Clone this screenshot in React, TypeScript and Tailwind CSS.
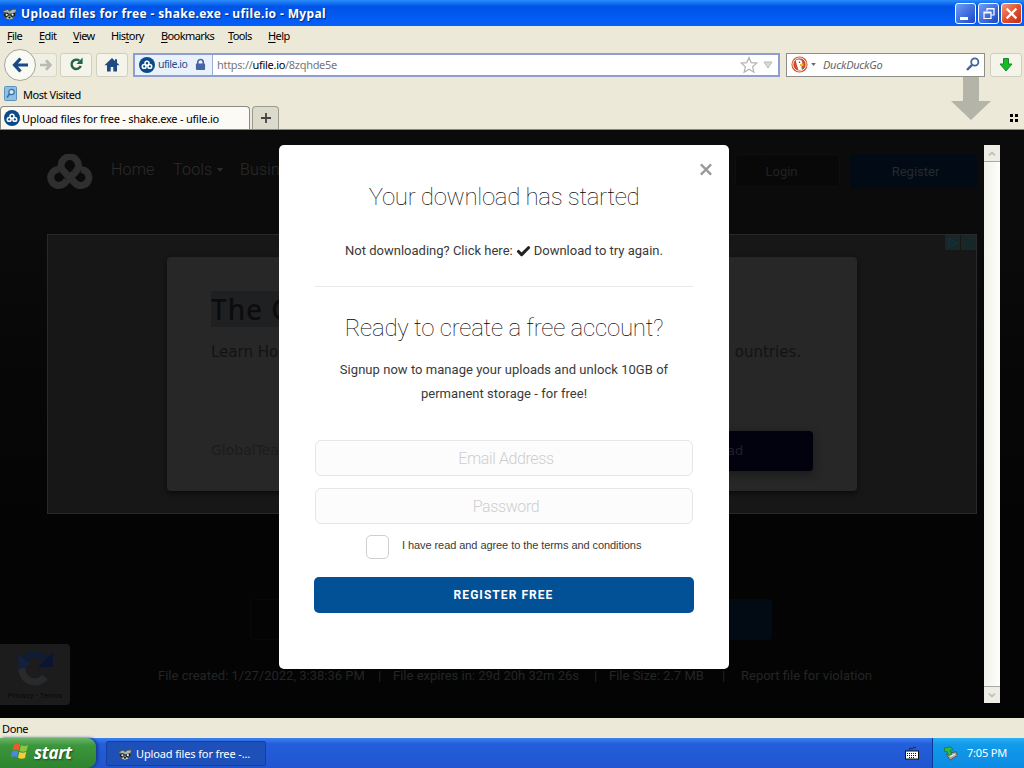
import React from "react";
import { Check } from "lucide-react";

const menuItems = [
  { label: "File", width: "w-8" },
  { label: "Edit", width: "w-[34px]" },
  { label: "View", width: "w-[38px]" },
  { label: "History", key: 3, width: "w-[50px]" },
  { label: "Bookmarks", width: "w-[67px]" },
  { label: "Tools", width: "w-10" },
  { label: "Help", width: "w-10" },
];

const fileInfo = [
  { text: "File created: 1/27/2022, 3:38:36 PM", width: "w-[208px]" },
  { text: "File expires in: 29d 20h 32m 26s", width: "w-[189px]" },
  { text: "File Size: 2.7 MB", width: "w-[101px]" },
  { text: "Report file for violation", width: "w-[130px]" },
];

function Knot({ className }: { className?: string }) {
  return (
    <svg viewBox="0 0 46 36" className={className} fill="none" stroke="currentColor" strokeWidth="7" strokeLinejoin="round">
      <path d="M19 28 L17 29.5 A8 8 0 1 1 12 15.5" />
      <path d="M28 18.5 L30 16 A8.6 8.6 0 1 0 15.5 16 L28 29 A8 8 0 1 0 34 15.5" />
      <path d="M29 17.5 L18 28.5" />
      <path d="M16 22.5 L19.5 26 M26 17.5 L22.5 14" stroke="#151515" strokeWidth="1" />
    </svg>
  );
}

function UfileIcon() {
  return (
    <div className="flex h-4 w-4 shrink-0 items-center justify-center rounded-full bg-[#0b4a86] text-white">
      <svg viewBox="0 0 16 16" className="h-4 w-4" fill="none" stroke="currentColor" strokeWidth="1.5">
        <circle cx="8" cy="6.2" r="2" />
        <circle cx="5.2" cy="9.4" r="1.9" />
        <circle cx="10.8" cy="9.4" r="1.9" />
      </svg>
    </div>
  );
}

function Raccoon({ className }: { className?: string }) {
  return (
    <svg viewBox="0 0 16 16" className={className}>
      <path d="M1 3 L5 4 L11 4 L15 1 L15 9 L11 14 L5 14 L1 11Z" fill="#4a5452" />
      <path d="M1 6 L6 4 L8 6 L11 4 L15 4 L14 7 L9 8 L5 7Z" fill="#a8b5b0" />
      <path d="M1.5 9 L6 7 L7 10 L4 12Z M9 9 L14 7 L14 10 L10 12Z" fill="#111a1a" />
      <circle cx="5" cy="9.4" r="1.2" fill="#e8f0ea" />
      <circle cx="11.3" cy="9.3" r="1.2" fill="#e8f0ea" />
      <path d="M4 13 L8 10.5 L12 13 L8 14.5Z" fill="#c5cdc8" />
      <circle cx="8" cy="12.3" r="1.2" fill="#101414" />
    </svg>
  );
}

function TitleBar() {
  const button = "flex h-[21px] w-[21px] items-center justify-center rounded-[3px] border border-white";
  return (
    <div className="flex h-[26px] items-center bg-linear-to-b from-[#2b8cfb] via-[#0054e6] via-25% to-[#0560fa] pl-0.5 pr-0.5">
      <Raccoon className="h-[15px] w-[15px]" />
      <h1 className="ml-1 grow whitespace-nowrap pt-px font-['Noto_Sans','Open_Sans',sans-serif] text-[12px] font-bold tracking-[0.36px] text-white [text-shadow:1px_1px_1px_#0a2a80]">
        Upload files for free - shake.exe - ufile.io - Mypal
      </h1>
      <div className="flex gap-0.5">
        <div className={`${button} bg-linear-to-br from-[#6f9cf5] to-[#1c44c8]`}>
          <span className="mt-2.5 mr-1 h-[3px] w-2 bg-white" />
        </div>
        <div className={`${button} bg-linear-to-br from-[#6f9cf5] to-[#1c44c8]`}>
          <svg viewBox="0 0 12 12" className="h-3 w-3" fill="none" stroke="white">
            <path d="M4 4V1.5H11V8H8.5M4 2H11M1 5H8V11.5H1ZM1 6H8" strokeWidth="1.2" />
          </svg>
        </div>
        <div className={`${button} bg-linear-to-br from-[#f0957a] via-[#df5030] to-[#c03010]`}>
          <svg viewBox="0 0 12 12" className="h-[13px] w-[13px]" stroke="white" strokeWidth="2">
            <path d="M1.5 1.5L10.5 10.5M10.5 1.5L1.5 10.5" />
          </svg>
        </div>
      </div>
    </div>
  );
}

function MenuBar() {
  return (
    <div className="flex h-[21px] items-center pl-[7px] text-[11px] tracking-[-0.6px]">
      {menuItems.map(({ label, key = 0, width }) => (
        <span key={label} className={`${width} whitespace-nowrap`}>
          {label.slice(0, key)}
          <span className="underline underline-offset-2">{label[key]}</span>
          {label.slice(key + 1)}
        </span>
      ))}
    </div>
  );
}

function NavBar() {
  const button = "flex h-6 w-8 items-center justify-center rounded-[3px] border border-[#d0cebf] bg-[#f5f4ea]";
  return (
    <div className="flex h-[35px] items-center pl-1 pr-0.5">
      <div className="z-10 flex h-8 w-8 shrink-0 items-center justify-center rounded-full border border-[#a5a498] bg-[#fafaf5]">
        <svg viewBox="0 0 16 16" className="h-4 w-4" fill="none" stroke="#184a86" strokeWidth="3.2">
          <path d="M8.5 1.5L2.5 8L8.5 14.5M2.5 8H16" />
        </svg>
      </div>
      <div className="-ml-1.5 flex h-6 w-[27px] items-center justify-center rounded-r-[3px] border border-[#d8d6c8] bg-[#f0efe4]">
        <svg viewBox="0 0 14 14" className="ml-1 h-3 w-3" fill="none" stroke="#b9bab5" strokeWidth="3.2">
          <path d="M7 1.5L12 7L7 12.5M12 7H0" />
        </svg>
      </div>
      <div className={`${button} ml-[3px]`}>
        <svg viewBox="0 0 16 16" className="h-[15px] w-[15px]" fill="none">
          <path d="M12.5 9.5A5 5 0 1 1 11 4" stroke="#266447" strokeWidth="2.6" />
          <path d="M14.5 0.5V7.5H8Z" fill="#266447" />
        </svg>
      </div>
      <div className={`${button} ml-1`}>
        <svg viewBox="0 0 16 16" className="h-4 w-4" fill="#204b80">
          <path d="M8 1L0.5 8.2H3V14.5H6.7V10H9.3V14.5H13V8.2H15.5L13 5.8V2.3H11V4Z" />
        </svg>
      </div>
      <div className="ml-[5px] flex h-6 w-[647px] items-center border-2 border-[#8f9ed2] bg-white">
        <div className="flex h-full w-[78px] shrink-0 items-center border-r border-[#9aaed5] bg-[#e9f1fb] pl-1 text-[#1d4f8c]">
          <UfileIcon />
          <span className="ml-[3px] w-[37px] whitespace-nowrap pt-px text-[10.5px] tracking-[-0.5px]">ufile.io</span>
          <svg viewBox="0 0 12 14" className="h-[13px] w-[11px]">
            <path d="M3 7V4.5A3 3 0 0 1 9 4.5V7" fill="none" stroke="#4a63a5" strokeWidth="1.8" />
            <rect x="1" y="6" width="10" height="7" rx="1" fill="#4a63a5" />
          </svg>
        </div>
        <span className="ml-1 grow pt-px text-[11px] tracking-[-0.3px] text-[#77777a]">
          https://<span className="text-black">ufile.io</span>/8zqhde5e
        </span>
        <svg viewBox="0 0 18 18" className="h-[18px] w-[18px]" fill="#fff" stroke="#b4b4b4" strokeWidth="1.2">
          <path d="M9 1.5L11.2 6.6L16.8 7.1L12.6 10.7L13.9 16.2L9 13.3L4.1 16.2L5.4 10.7L1.2 7.1L6.8 6.6Z" />
        </svg>
        <svg viewBox="0 0 10 8" className="mx-[5px] h-2 w-2.5" fill="#d8dcd8" stroke="#b4b9b4">
          <path d="M1 1H9L5 7Z" />
        </svg>
      </div>
      <div className="ml-1.5 flex h-6 w-[199px] items-center border border-[#8e8e88] bg-white pl-1">
        <svg viewBox="0 0 18 18" className="h-[17px] w-[17px]">
          <circle cx="9" cy="9" r="8.5" fill="#cf4a24" />
          <circle cx="9" cy="9" r="7" fill="none" stroke="#fff" strokeWidth="1" />
          <path d="M5 4.5C9 2.8 12 4 12 7.5L11 10L12 14.5L8 15L6 9Z" fill="#fff" />
          <path d="M9.5 8.5L13.5 8L13 10.5L9.5 10.5Z" fill="#f1b62c" />
          <path d="M10 12.5L13 12V14Z" fill="#3e9a3a" />
          <circle cx="9" cy="6.6" r="0.8" fill="#254a80" />
        </svg>
        <svg viewBox="0 0 6 4" className="ml-[3px] h-[3px] w-[5px]" fill="#666">
          <path d="M0 0H6L3 4Z" />
        </svg>
        <span className="ml-[7px] grow pt-px text-[11px] tracking-[-0.25px] italic text-[#666]">DuckDuckGo</span>
        <svg viewBox="0 0 14 14" className="mr-1 mb-0.5 h-3.5 w-3.5" fill="none" stroke="#40679b">
          <circle cx="8.8" cy="5" r="3.6" strokeWidth="1.8" />
          <path d="M6 7.8L1 13" strokeWidth="2.4" />
        </svg>
      </div>
      <div className={`${button} ml-[5px]`}>
        <svg viewBox="0 0 14 14" className="h-3.5 w-3.5" fill="#14bb25" stroke="#16872a">
          <path d="M4.5 0.5H9.5V6H13L7 13L1 6H4.5Z" />
        </svg>
      </div>
    </div>
  );
}

function TabStrip() {
  return (
    <div className="flex h-[25px] items-end border-b border-[#88877c]">
      <div className="flex h-[23px] w-[250px] items-center rounded-t-[4px] border border-b-0 border-[#8b8a80] bg-[#fbfaf4] pl-[3px]">
        <UfileIcon />
        <span className="ml-0.5 whitespace-nowrap pt-0.5 text-[11px] tracking-[-0.22px]">
          Upload files for free - shake.exe - ufile.io
        </span>
      </div>
      <div className="ml-0.5 flex h-[23px] w-[27px] items-center justify-center rounded-t-[4px] border border-b-0 border-[#9c9b90] bg-[#dcdacb]">
        <svg viewBox="0 0 10 10" className="h-2.5 w-2.5" stroke="#444" strokeWidth="1.8">
          <path d="M5 0V10M0 5H10" />
        </svg>
      </div>
      <div className="mr-1.5 mb-[7px] ml-auto grid grid-cols-2 gap-[2px]">
        <span className="h-[3px] w-[3px] bg-black" />
        <span className="h-[3px] w-[3px] bg-black" />
        <span className="h-[3px] w-[3px] bg-black" />
        <span className="h-[3px] w-[3px] bg-black" />
      </div>
    </div>
  );
}

function DimmedPage() {
  return (
    <div className="flex h-full flex-col bg-linear-to-b from-[#0b0b0b] from-15% to-[#040404] to-65% font-[Roboto,sans-serif] text-[#2b2b2b]">
      <div className="flex h-[104px] items-start pt-6 pl-[47px] pr-[47px]">
        <Knot className="h-9 w-[46px] text-[#2f2f2f]" />
        <div className="ml-[18px] flex w-[624px] pt-1 text-[16px] font-light tracking-[0.2px]">
          <span className="w-[62px]">Home</span>
          <span className="flex w-[67px] items-center">
            Tools
            <svg viewBox="0 0 8 5" className="ml-1 h-1 w-2" fill="currentColor">
              <path d="M0 0H8L4 5Z" />
            </svg>
          </span>
          <span>Business</span>
        </div>
        <div className="flex h-[33px] w-[105px] shrink-0 items-center justify-center rounded border border-[#0e0e0e] bg-[#080808] pt-0.5 pr-3 text-[13px] text-[#222]">
          Login
        </div>
        <div className="ml-2.5 flex h-[34px] w-[127px] shrink-0 items-center justify-center rounded bg-[#020b15] pt-0.5 pl-1 text-[13px] text-[#232a30]">
          Register
        </div>
      </div>

      <div className="relative mx-[47px] flex h-[280px] shrink-0 items-center justify-center border border-[#292929] bg-[#171717]">
        <div className="absolute top-0 right-0 flex gap-px">
          <div className="flex h-[15px] w-[15px] items-center justify-center bg-[#1b2627]">
            <svg viewBox="0 0 12 12" className="h-3 w-3" fill="none" stroke="#0a3640" strokeWidth="1.3">
              <path d="M2 1.5L10 6L2 10.5Z" />
            </svg>
          </div>
          <div className="flex h-[15px] w-[15px] items-center justify-center bg-[#1b2627]">
            <svg viewBox="0 0 12 12" className="h-3 w-3" stroke="#0d2b30" strokeWidth="1.6">
              <path d="M2 2L10 10M10 2L2 10" />
            </svg>
          </div>
        </div>
        <div className="flex h-[234px] w-[690px] flex-col rounded bg-[#272727] pt-[34px] pr-11 pl-11 shadow-[0_2px_5px_#0b0b0b]">
          <div className="flex">
            <span className="h-9 bg-[#1f2021] pr-2 font-['Noto_Sans',sans-serif] text-[28px] leading-9 font-medium tracking-[0.9px] text-[#0c0c0d]">
              The C
            </span>
          </div>
          <div className="mt-3.5 flex justify-between pr-3 font-['DejaVu_Sans',sans-serif] text-[15px] text-[#131313]">
            <span>Learn Ho</span>
            <span>ountries.</span>
          </div>
          <div className="mt-[67px] flex items-center justify-between font-['DejaVu_Sans',sans-serif] text-[14px] text-[#1c1c1c]">
            <span>GlobalTea</span>
            <div className="flex h-10 w-[155px] items-center rounded bg-[#02020e] pl-[69px] text-[13px] shadow-[0_3px_8px_#1a1a1a]">
              <span className="text-[#20202a]">ad</span>
            </div>
          </div>
        </div>
      </div>

      <div className="mt-[85px] ml-[250px] flex h-[41px] w-[522px] shrink-0 justify-between">
        <div className="w-[250px] rounded border border-[#080808]" />
        <div className="w-[250px] rounded bg-[#020b13]" />
      </div>

      <div className="flex grow items-start">
        <div className="mt-1 flex h-[61px] w-[70px] flex-col items-center rounded-r bg-[#1c1c1d] pt-1">
          <svg viewBox="0 0 40 40" className="h-10 w-10" fill="none" strokeWidth="7">
            <path d="M7 19A13 13 0 0 1 30 11" stroke="#101c33" />
            <path d="M38 4V19H23Z" fill="#0c1430" />
            <path d="M7 19A13 13 0 0 0 30 29" stroke="#292a2c" />
            <path d="M3 6L16 16L4 22Z" fill="#13213d" />
          </svg>
          <span className="mt-0.5 text-[8px] leading-3 whitespace-nowrap text-[#090909]">Privacy - Terms</span>
        </div>
        <div className="mt-[26px] ml-[88px] flex text-[13px] text-[#252525]">
          {fileInfo.map((info, index) => (
            <div key={info.text} className="flex">
              {index > 0 && <span className={index === 3 ? "w-[31px] pl-3" : "w-[27px] pl-3"}>|</span>}
              <span className={`${info.width} whitespace-nowrap`}>{info.text}</span>
            </div>
          ))}
        </div>
      </div>
    </div>
  );
}

function DownloadModal() {
  return (
    <div className="absolute top-[15px] left-[279px] flex h-[524px] w-[450px] flex-col rounded-[5px] bg-white px-9 text-center font-[Roboto,'Liberation_Sans',sans-serif] text-[#3a3a3a]">
      <div className="-mr-5 flex h-[34px] items-end justify-end pb-[3px]">
        <svg viewBox="0 0 14 14" className="h-[13px] w-3.5" stroke="#999" strokeWidth="2.5">
          <path d="M1.5 1.5L12.5 12.5M12.5 1.5L1.5 12.5" />
        </svg>
      </div>
      <h2 className="mt-0.5 text-[24px] leading-8 font-thin tracking-[-0.3px] whitespace-nowrap text-black">
        Your download has started
      </h2>
      <p className="mt-[26px] flex items-center justify-center text-[13px] leading-6 whitespace-nowrap">
        Not downloading? Click here:
        <Check className="mx-[3px] h-[15px] w-[15px] text-[#222]" strokeWidth={5} />
        Download to try again.
      </p>
      <div className="mt-[23px] h-px bg-[#ebebeb]" />
      <h2 className="mt-[25px] text-[24px] leading-8 font-thin tracking-[-0.22px] whitespace-nowrap text-black">
        Ready to create a free account?
      </h2>
      <p className="mt-3.5 text-[13px] leading-6 tracking-[0.04px]">
        Signup now to manage your uploads and unlock 10GB of
        <br />
        permanent storage - for free!
      </p>
      <input
        placeholder="Email Address"
        className="mt-[34px] h-9 shrink-0 rounded-[6px] border border-[#e6e6e6] bg-[#fcfcfc] pl-1 text-center text-[16px] font-light tracking-[-0.4px] placeholder:text-[#cecece]"
      />
      <input
        placeholder="Password"
        className="mt-3 h-9 shrink-0 rounded-[6px] border border-[#e6e6e6] bg-[#fcfcfc] pl-1 text-center text-[16px] font-light tracking-[-0.4px] placeholder:text-[#cecece]"
      />
      <label className="mt-[11px] flex h-6 items-center pl-[51px]">
        <span className="h-6 w-[23px] rounded-[5px] border border-[#cfcfcf] bg-white" />
        <span className="mb-[3px] ml-[13px] font-['Liberation_Sans',sans-serif] text-[11px] tracking-[-0.07px] whitespace-nowrap">
          I have read and agree to the terms and conditions
        </span>
      </label>
      <button className="-mx-px mt-[18px] h-9 shrink-0 rounded-[5px] bg-[#025096] pr-px text-[12px] font-bold tracking-[1.05px] text-white">
        REGISTER FREE
      </button>
    </div>
  );
}

function ScrollBar() {
  return (
    <div className="absolute top-[15px] left-[984px] flex h-[558px] w-4 flex-col justify-between bg-linear-to-r from-[#f2f1ea] to-[#fefefb]">
      <div className="flex h-[17px] items-center justify-center border-b border-[#a9a9a3] bg-[#eeede5]">
        <svg viewBox="0 0 8 5" className="h-[5px] w-2" fill="none" stroke="#c3c2b8" strokeWidth="1.8">
          <path d="M1 4.5L4 1.5L7 4.5" />
        </svg>
      </div>
      <div className="flex h-[17px] items-center justify-center border-t border-[#a9a9a3] bg-[#eeede5]">
        <svg viewBox="0 0 8 5" className="h-[5px] w-2" fill="none" stroke="#c3c2b8" strokeWidth="1.8">
          <path d="M1 0.5L4 3.5L7 0.5" />
        </svg>
      </div>
    </div>
  );
}

function Taskbar() {
  return (
    <div className="flex h-[30px] bg-linear-to-b from-[#3c81f0] via-[#245edb] via-20% to-[#2055cf] text-[11px] text-white">
      <div className="flex w-24 items-center rounded-r-[9px] bg-linear-to-b from-[#6bb567] via-[#3c963c] via-25% to-[#2f842f] pl-[11px] shadow-[2px_0_3px_#173c90]">
        <svg viewBox="0 0 18 17" className="mb-1 h-[18px] w-[18px]">
          <path d="M3 2Q6 0 9 2L7.5 8Q5 6.5 1.5 8Z" fill="#f0582c" />
          <path d="M10 2.5Q13 4.5 17 2.5L15.5 8.5Q12 10 8.5 8.5Z" fill="#8ac643" />
          <path d="M1.3 9Q4.5 7.5 7.3 9L6 14.5Q3 13 0 14.5Z" fill="#4d86ea" />
          <path d="M8.3 9.5Q11.5 11 15.2 9.5L14 15.5Q10.5 17 7 15.2Z" fill="#fbcb35" />
        </svg>
        <span className="ml-[5px] font-['Open_Sans','Noto_Sans',sans-serif] text-[17px] leading-5 font-bold tracking-[-0.3px] italic [text-shadow:1px_1px_2px_#184a18]">
          start
        </span>
      </div>
      <div className="mt-[3px] ml-2.5 flex h-[25px] w-[160px] items-center rounded-[2px] border border-[#173f9f] bg-[#1e50b9] pl-[11px]">
        <Raccoon className="h-3.5 w-3.5" />
        <span className="ml-1 whitespace-nowrap pt-px tracking-[-0.13px]">Upload files for free -...</span>
      </div>
      <svg viewBox="0 0 14 14" className="mt-2 mr-[13px] ml-auto h-3.5 w-3.5">
        <path d="M4 4L5 2L7 3L9 1L11 2" fill="none" stroke="#12275f" />
        <rect x="0.5" y="5" width="13" height="8" fill="#fff" stroke="#111" />
        <path d="M2 7.5H12M2 9.5H12M4 11.5H10" stroke="#111" strokeDasharray="1 1" />
      </svg>
      <div className="flex w-[92px] items-center border-l border-[#0a3a98] bg-linear-to-b from-[#2ab0f5] via-[#119be9] via-20% to-[#0d8be4] pl-2.5">
        <svg viewBox="0 0 16 16" className="h-[15px] w-4">
          <path d="M3 9L13 6L15 10L7 15Z" fill="#a5aaa7" stroke="#4a5555" />
          <path d="M7 11L12 9" stroke="#eee" strokeWidth="1.5" />
          <path d="M1 2L8 1L10 4L7 5L9 9L5 10L4 6L1 6Z" fill="#35ba3b" stroke="#167333" strokeWidth="0.7" />
        </svg>
        <span className="ml-2 whitespace-nowrap tracking-[-0.2px]">7:05 PM</span>
      </div>
    </div>
  );
}

function App() {
  return (
    <div className="relative flex h-[768px] w-[1024px] flex-col overflow-hidden bg-[#ece9d8] font-['Noto_Sans','Open_Sans',sans-serif] text-black">
      <TitleBar />
      <MenuBar />
      <NavBar />
      <div className="flex h-[23px] items-center pl-1 text-[11px]">
        <svg viewBox="0 0 14 15" className="h-[15px] w-3.5">
          <rect x="0.5" y="0.5" width="12" height="14" rx="1" fill="#8fc0e4" stroke="#5a91bd" />
          <circle cx="7.5" cy="6" r="2.7" fill="#d5eaf8" stroke="#386f9f" strokeWidth="1.2" />
          <path d="M5.5 8L3 11.5" stroke="#386f9f" strokeWidth="1.6" />
        </svg>
        <span className="ml-[5px] pt-[3px] tracking-[-0.45px]">Most Visited</span>
      </div>
      <TabStrip />
      <div className="relative h-[588px] shrink-0">
        <DimmedPage />
        <DownloadModal />
        <ScrollBar />
      </div>
      <div className="flex h-5 shrink-0 items-center pt-0.5 pl-0.5 text-[11px] tracking-[-0.4px]">Done</div>
      <Taskbar />
      {/* arrow dropped from the downloads button */}
      <svg viewBox="0 0 40 43" className="absolute top-[77px] left-[951px] h-[43px] w-10" fill="#b5b4a9">
        <path d="M12 0H28V24H40L20 43L0 24H12Z" />
      </svg>
    </div>
  );
}

export default App;
